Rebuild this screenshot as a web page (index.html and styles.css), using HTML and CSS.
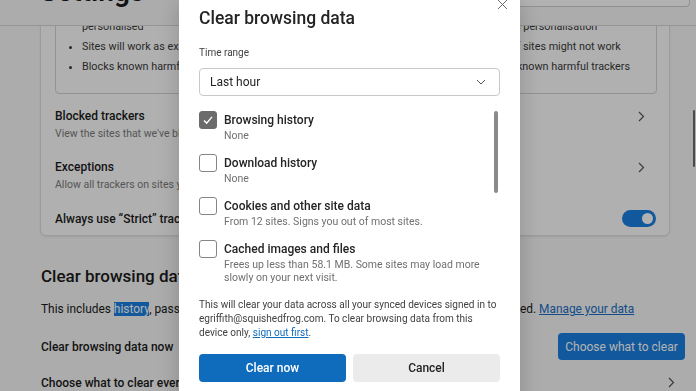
FILE: index.html
```html
<!DOCTYPE html>
<html lang="en">
<head>
  <meta charset="UTF-8" />
  <meta name="viewport" content="width=device-width, initial-scale=1" />
  <title>Settings - Privacy, search and services</title>
  <link rel="stylesheet" href="styles.css">
</head>
<body>

  <header class="topbar">
    <h1>Settings</h1>
    <div class="search"></div>
  </header>

  <main class="viewport">
    <div class="scroller">

      <!-- Tracking prevention card -->
      <section class="card">
        <div class="levels">
          <ul class="level">
            <li>Content and ads will likely be personalised</li>
            <li>Sites will work as expected</li>
            <li>Blocks known harmful trackers</li>
          </ul>
          <ul class="level">
            <li>Content and ads will likely be less personalised</li>
            <li>Sites will work as expected</li>
            <li>Blocks known harmful trackers</li>
          </ul>
          <ul class="level">
            <li>Content and ads will likely have minimal personalisation</li>
            <li>Parts of sites might not work</li>
            <li>Blocks known harmful trackers</li>
          </ul>
        </div>

        <div class="row">
          <div>
            <h3>Blocked trackers</h3>
            <p>View the sites that we've blocked from tracking you</p>
          </div>
          <svg class="chev" viewBox="0 0 7 11"><path d="M1 1l4.5 4.5L1 10" fill="none" stroke="#555" stroke-width="1.2"/></svg>
        </div>

        <div class="row">
          <div>
            <h3>Exceptions</h3>
            <p>Allow all trackers on sites you choose</p>
          </div>
          <svg class="chev" viewBox="0 0 7 11"><path d="M1 1l4.5 4.5L1 10" fill="none" stroke="#555" stroke-width="1.2"/></svg>
        </div>

        <div class="row row-toggle">
          <h3>Always use “Strict” tracking prevention when browsing InPrivate</h3>
          <div class="toggle"><span></span></div>
        </div>
      </section>

      <!-- Clear browsing data section -->
      <section class="clear">
        <h2>Clear browsing data</h2>
        <p class="intro">This includes <mark>history</mark>, passwords, cookies and more. Only data from this profile will be deleted. <a href="#">Manage your data</a></p>
        <div class="action">
          <span>Clear browsing data now</span>
          <button class="btn-blue" type="button">Choose what to clear</button>
        </div>
        <div class="action">
          <span>Choose what to clear every time you close the browser</span>
          <svg class="chev chev-end" viewBox="0 0 7 11"><path d="M1 1l4.5 4.5L1 10" fill="none" stroke="#555" stroke-width="1.2"/></svg>
        </div>
      </section>

    </div>
  </main>

  <div class="page-scroll"></div>
  <div class="overlay"></div>

  <!-- Dialog -->
  <div class="dialog" role="dialog" aria-label="Clear browsing data">
    <svg class="dialog-close" viewBox="0 0 11 11"><path d="M1 1l9 9M10 1l-9 9" stroke="#6a6a6a" stroke-width="1"/></svg>
    <h2>Clear browsing data</h2>

    <p class="field-label">Time range</p>
    <div class="select">
      <span>Last hour</span>
      <svg viewBox="0 0 10 6"><path d="M1 1l4 4 4-4" fill="none" stroke="#555" stroke-width="1"/></svg>
    </div>

    <div class="list">
      <div class="item">
        <div class="check on">
          <svg viewBox="0 0 18 18"><path d="M4.5 9.5l3 3 6-7" fill="none" stroke="#fff" stroke-width="1.6"/></svg>
        </div>
        <div class="item-text">
          <h3>Browsing history</h3>
          <p>None</p>
        </div>
      </div>
      <div class="item">
        <div class="check"></div>
        <div class="item-text">
          <h3>Download history</h3>
          <p>None</p>
        </div>
      </div>
      <div class="item">
        <div class="check"></div>
        <div class="item-text">
          <h3>Cookies and other site data</h3>
          <p>From 12 sites. Signs you out of most sites.</p>
        </div>
      </div>
      <div class="item">
        <div class="check"></div>
        <div class="item-text">
          <h3>Cached images and files</h3>
          <p>Frees up less than 58.1 MB. Some sites may load more slowly on your next visit.</p>
        </div>
      </div>
      <div class="thumb"></div>
    </div>

    <p class="notice">This will clear your data across all your synced devices signed in to egriffith@squishedfrog.com. To clear browsing data from this device only, <a href="#">sign out first</a>.</p>

    <div class="dialog-actions">
      <button class="btn-primary" type="button">Clear now</button>
      <button class="btn-cancel" type="button">Cancel</button>
    </div>
  </div>

</body>
</html>
```

FILE: styles.css
```css
/* Base */
* {
  box-sizing: border-box;
}

body {
  margin: 0;
  height: 100vh;
  overflow: hidden;
  background: #f6f6f6;
  color: #1b1b1b;
  font-family: "Segoe UI", Roboto, "Open Sans", sans-serif;
  position: relative;
}

/* Header */
.topbar {
  height: 26px;
  border-bottom: 1px solid #d6d6d6;
  display: flex;
  justify-content: space-between;
  align-items: flex-start;
  overflow: hidden;
}

.topbar h1 {
  margin: -24px 0 0 40px;
  font-size: 28px;
  line-height: 32px;
  font-weight: 600;
}

.search {
  margin: -20px 6px 0 0;
  width: 300px;
  height: 27px;
  background: #fff;
  border: 1px solid #cfcfcf;
  border-radius: 4px;
}

/* Scrolled content */
.viewport {
  height: calc(100vh - 26px);
  overflow: hidden;
}

.scroller {
  margin-top: -50px;
  padding: 0 11px 0 40px;
}

.card {
  margin-right: 15px;
  background: #fdfdfd;
  border: 1px solid #e0e0e0;
  border-radius: 6px;
  padding: 14px 12px 0 14px;
  box-shadow: 0 1px 2px rgba(0, 0, 0, 0.08);
}

.levels {
  display: grid;
  grid-template-columns: repeat(3, 1fr);
  border: 1px solid #d3d3d3;
  border-radius: 4px;
  padding: 14px 0 19px;
  margin-bottom: 5px;
}

.level {
  margin: 0;
  padding: 0 10px 0 26px;
  font-size: 10.8px;
  line-height: 14px;
  color: #3a3a3a;
}

.level li {
  margin-bottom: 6px;
}

.level li:last-child {
  margin-bottom: 0;
}

.row {
  display: flex;
  align-items: flex-start;
  justify-content: space-between;
  padding: 9px 0;
}

.row h3 {
  margin: 0;
  font-size: 12px;
  line-height: 16px;
  font-weight: 500;
}

.row p {
  margin: 3px 0 0;
  font-size: 10.5px;
  line-height: 14px;
  color: #7a7a7a;
}

.chev {
  width: 7px;
  height: 11px;
  margin: 3px 12px 0 0;
  flex: none;
}

.row-toggle {
  align-items: center;
  padding-bottom: 8px;
}

.toggle {
  width: 34px;
  height: 17px;
  border-radius: 9px;
  background: #1a7fe0;
  margin-right: 1px;
  display: flex;
  align-items: center;
  justify-content: flex-end;
  padding-right: 3px;
}

.toggle span {
  width: 11px;
  height: 11px;
  border-radius: 50%;
  background: #fff;
}

/* Clear browsing data section */
.clear {
  padding-left: 1px;
}

.clear h2 {
  margin: 28px 0 0;
  font-size: 17px;
  line-height: 24px;
  font-weight: 500;
}

.intro {
  margin: 13px 0 0;
  font-size: 11.9px;
  line-height: 16px;
  white-space: nowrap;
}

.intro mark {
  background: #1a7fe0;
  color: #fff;
}

.intro a {
  color: #1a6fc4;
}

.action {
  display: flex;
  align-items: center;
  justify-content: space-between;
  min-height: 27px;
  margin-top: 16px;
  font-size: 12px;
  font-weight: 500;
}

.action + .action {
  margin-top: 9px;
}

.btn-blue {
  width: 127px;
  height: 27px;
  border: none;
  border-radius: 4px;
  background: #1a7fe0;
  color: #fff;
  font: inherit;
  font-weight: 400;
}

.chev-end {
  margin: 0 10px 0 0;
}

.page-scroll {
  position: absolute;
  right: 1px;
  top: 110px;
  width: 2px;
  height: 57px;
  border-radius: 1px;
  background: #6a6a6a;
}

/* Modal */
.overlay {
  position: fixed;
  inset: 0;
  background: rgba(0, 0, 0, 0.3);
}

.dialog {
  position: fixed;
  left: 179px;
  top: -8px;
  width: 341px;
  height: 420px;
  background: #fff;
  border-radius: 8px;
  padding: 14px 20px 0;
  box-shadow: 0 8px 24px rgba(0, 0, 0, 0.2);
}

.dialog-close {
  position: absolute;
  top: 7px;
  right: 12px;
  width: 11px;
  height: 11px;
}

.dialog h2 {
  margin: 0;
  font-size: 17.5px;
  line-height: 24px;
  font-weight: 500;
  color: #242424;
}

.field-label {
  margin: 16px 0 0;
  font-size: 10px;
  line-height: 14px;
  color: #424242;
}

.select {
  margin-top: 8px;
  height: 28px;
  border: 1px solid #c9c9c9;
  border-radius: 4px;
  padding: 0 13px 0 10px;
  display: flex;
  align-items: center;
  justify-content: space-between;
  font-size: 12px;
  color: #242424;
}

.select svg {
  width: 10px;
  height: 6px;
}

.list {
  position: relative;
  margin-top: 15px;
}

.item {
  display: flex;
  gap: 7px;
  margin-bottom: 12px;
}

.item:last-of-type {
  margin-bottom: 0;
}

.check {
  width: 18px;
  height: 18px;
  border: 1px solid #858585;
  border-radius: 3px;
  flex: none;
}

.check.on {
  background: #6b6b6b;
  border-color: #6b6b6b;
}

.check svg {
  display: block;
  width: 16px;
  height: 16px;
}

.item-text {
  width: 262px;
}

.item h3 {
  margin: 0;
  font-size: 12px;
  line-height: 18px;
  font-weight: 500;
  color: #242424;
}

.item p {
  margin: 0;
  font-size: 10.5px;
  line-height: 13px;
  color: #707070;
}

.thumb {
  position: absolute;
  top: 0;
  right: 2px;
  width: 4px;
  height: 82px;
  border-radius: 2px;
  background: #8a8a8a;
}

.notice {
  margin: 14px 0 0;
  font-size: 10.05px;
  line-height: 14px;
  color: #424242;
}

.notice a {
  color: #0f6cbd;
}

.dialog-actions {
  margin-top: 14px;
  display: grid;
  grid-template-columns: 1fr 1fr;
  gap: 7px;
}

.dialog-actions button {
  height: 28px;
  border: none;
  border-radius: 4px;
  font: inherit;
  font-size: 12px;
  font-weight: 500;
}

.btn-primary {
  background: #0f6cbd;
  color: #fff;
}

.btn-cancel {
  background: #ebebeb;
  color: #242424;
}
```
